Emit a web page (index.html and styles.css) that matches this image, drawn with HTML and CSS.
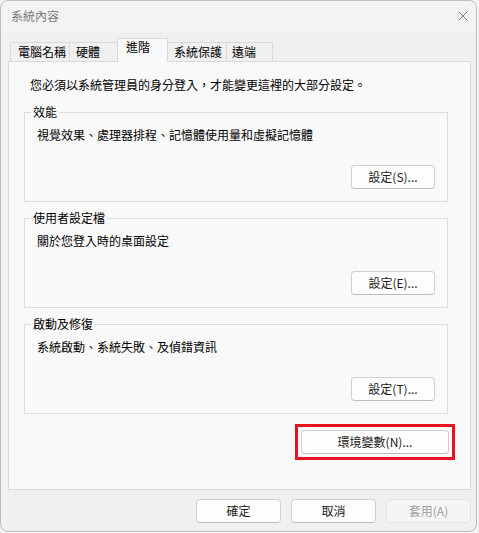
FILE: index.html
```html
<!DOCTYPE html>
<html lang="zh-Hant">
<head>
<meta charset="utf-8">
<title>系統內容</title>
<link rel="stylesheet" href="styles.css">
</head>
<body>
<div class="window">
  <div class="titlebar">
    <span class="title">系統內容</span>
    <svg class="close" width="10" height="10" viewBox="0 0 10 10"><path d="M0.5 0.5L9.5 9.5M9.5 0.5L0.5 9.5" stroke="#808080" stroke-width="1" fill="none"/></svg>
  </div>
  <div class="tabs">
    <div class="tab t1">電腦名稱</div>
    <div class="tab t2">硬體</div>
    <div class="tab t3 selected">進階</div>
    <div class="tab t4">系統保護</div>
    <div class="tab t5">遠端</div>
  </div>
  <div class="panel">
    <p class="intro">您必須以系統管理員的身分登入，才能變更這裡的大部分設定。</p>
    <fieldset class="group">
      <legend>效能</legend>
      <p class="desc">視覺效果、處理器排程、記憶體使用量和虛擬記憶體</p>
      <div class="row"><button class="btn">設定(S)...</button></div>
    </fieldset>
    <fieldset class="group">
      <legend>使用者設定檔</legend>
      <p class="desc">關於您登入時的桌面設定</p>
      <div class="row"><button class="btn">設定(E)...</button></div>
    </fieldset>
    <fieldset class="group">
      <legend>啟動及修復</legend>
      <p class="desc">系統啟動、系統失敗、及偵錯資訊</p>
      <div class="row"><button class="btn">設定(T)...</button></div>
    </fieldset>
    <div class="env-row"><div class="highlight"><button class="btn env">環境變數(N)...</button></div></div>
  </div>
  <div class="footer">
    <button class="btn fbtn">確定</button>
    <button class="btn fbtn">取消</button>
    <button class="btn fbtn disabled">套用(A)</button>
  </div>
</div>
</body>
</html>
```
FILE: styles.css
```css
* { box-sizing: border-box; }
html, body {
  margin: 0;
  padding: 0;
}
body {
  background: #f3f3f3;
  font-family: "Noto Sans CJK TC", "Noto Sans", sans-serif;
  font-size: 12px;
  line-height: 16px;
  color: #000;
}
.window {
  width: 477px;
  height: 532px;
  border: 1px solid #bdbdbd;
  border-radius: 8px;
  background: #f0f0f0;
  overflow: hidden;
}
.titlebar {
  height: 30px;
  background: #f3f3f3;
  display: flex;
  align-items: center;
  justify-content: space-between;
  padding: 0 8px 0 10px;
}
.title {
  color: #7a7a7a;
}
.close { display: block; }
.tabs {
  display: flex;
  align-items: flex-end;
  margin-top: 8px;
  padding-left: 9px;
  height: 22px;
}
.tab {
  height: 19px;
  border: 1px solid #d9d9d9;
  border-bottom: none;
  margin-right: -1px;
  padding-left: 6px;
  line-height: 18px;
  background: #f0f0f0;
  white-space: nowrap;
}
.t1 { width: 60px; padding-left: 7px; }
.t2 { width: 49px; }
.t3 { width: 51px; }
.t4 { width: 60px; }
.t5 { width: 47px; padding-left: 5px; }
.tab.selected {
  height: 24px;
  margin-bottom: -1px;
  padding-left: 8px;
  line-height: 16px;
  background: #f9f9f9;
  position: relative;
  z-index: 1;
}
.panel {
  margin: 0 5px 0 7px;
  height: 429px;
  background: #f9f9f9;
  border: 1px solid #d9d9d9;
}
.intro {
  margin: 0;
  padding: 15px 0 0 21px;
}
.group {
  margin: 11px 0 0 15px;
  width: 424px;
  padding: 0 12px 12px 12px;
  border: 1px solid #dcdcdc;
  min-inline-size: 0;
}
.group + .group { margin-top: 8px; }
.group legend {
  padding: 0 2px;
  margin-left: -6px;
}
.desc {
  margin: 7px 0 0 0;
}
.row {
  display: flex;
  justify-content: flex-end;
  margin-top: 22px;
}
.btn {
  font-family: inherit;
  font-size: 12px;
  line-height: 16px;
  color: #1b1b1b;
  background: #fdfdfd;
  border: 1px solid #d0d0d0;
  border-bottom-color: #bcbcbc;
  border-radius: 4px;
  height: 24px;
  width: 84px;
  padding: 0;
  margin: 0;
}
.env-row {
  display: flex;
  justify-content: flex-end;
  padding-right: 15px;
  margin-top: 10px;
}
.highlight {
  border: 3px solid #e8131f;
  padding: 3px;
  display: flex;
}
.btn.env {
  width: 148px;
}
.footer {
  display: flex;
  justify-content: flex-end;
  gap: 10px;
  margin-top: 9px;
  padding-right: 5px;
}
.fbtn { width: 85px; }
.fbtn.disabled {
  color: #9e9e9e;
  background: #f5f5f5;
  border-color: #e3e3e3;
}
```
